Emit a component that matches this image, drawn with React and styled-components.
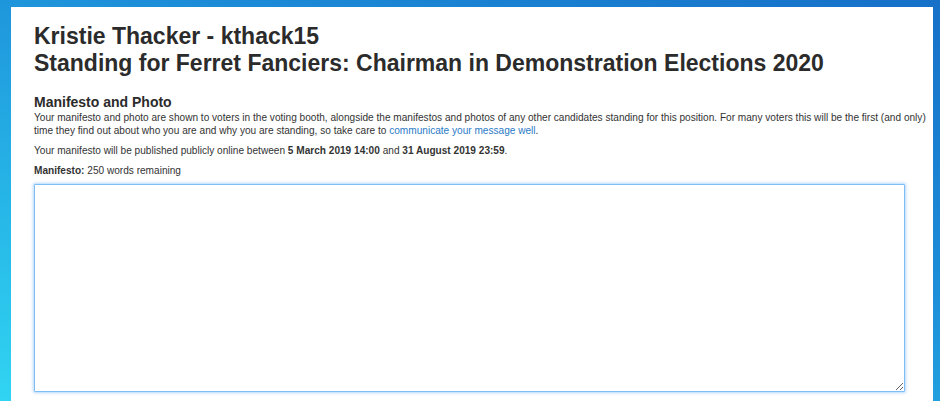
import React from 'react';
import styled, { createGlobalStyle } from 'styled-components';

const GlobalStyle = createGlobalStyle`
  html, body {
    margin: 0;
    padding: 0;
    height: 100%;
  }
  body {
    font-family: "Liberation Sans", Arial, Helvetica, sans-serif;
    color: #333;
    overflow: hidden;
  }
`;

const Backdrop = styled.div`
  height: 401px;
  padding: 7px 7px 0 11px;
  box-sizing: border-box;
  background: linear-gradient(200deg, #1670c8 0%, #1d8fd9 40%, #27b8e8 75%, #31d4f2 100%);
`;

const Panel = styled.main`
  background: #fff;
  height: 100%;
  padding: 16px 6px 0 23px;
  box-sizing: border-box;
`;

const Title = styled.h1`
  margin: 0;
  font-size: 23px;
  line-height: 27px;
  font-weight: bold;
  color: #2b2b2b;
`;

const SectionTitle = styled.h2`
  margin: 16px 0 0;
  font-size: 14px;
  line-height: 18px;
  font-weight: bold;
  color: #2b2b2b;
`;

const Text = styled.p`
  margin: 0 0 ${p => p.$gap || 7}px;
  font-size: 10.1px;
  line-height: 13px;
  color: #333;
`;

const Link = styled.a`
  color: #2a7ac7;
  text-decoration: none;
`;

const ManifestoBox = styled.textarea`
  display: block;
  width: calc(100% - 22px);
  height: 208px;
  box-sizing: border-box;
  border: 1px solid #7fbef4;
  border-radius: 1px;
  box-shadow: 0 0 3px 1px rgba(120, 180, 245, 0.55);
  outline: none;
  resize: both;
  font-family: inherit;
  font-size: 12px;
  padding: 4px;
  margin-top: 7px;
`;

export default function App() {
  return (
    <>
      <GlobalStyle />
      <Backdrop>
        <Panel>
          <Title>
            Kristie Thacker - kthack15
            <br />
            Standing for Ferret Fanciers: Chairman in Demonstration Elections 2020
          </Title>
          <SectionTitle>Manifesto and Photo</SectionTitle>
          <Text>
            Your manifesto and photo are shown to voters in the voting booth, alongside the manifestos and photos of any other candidates standing for this position. For many voters this will be the first (and only) time they find out about who you are and why you are standing, so take care to{' '}
            <Link href="#">communicate your message well</Link>.
          </Text>
          <Text>
            Your manifesto will be published publicly online between <b>5 March 2019 14:00</b> and <b>31 August 2019 23:59</b>.
          </Text>
          <Text $gap={3}>
            <b>Manifesto:</b> 250 words remaining
          </Text>
          <ManifestoBox autoFocus />
        </Panel>
      </Backdrop>
    </>
  );
}
